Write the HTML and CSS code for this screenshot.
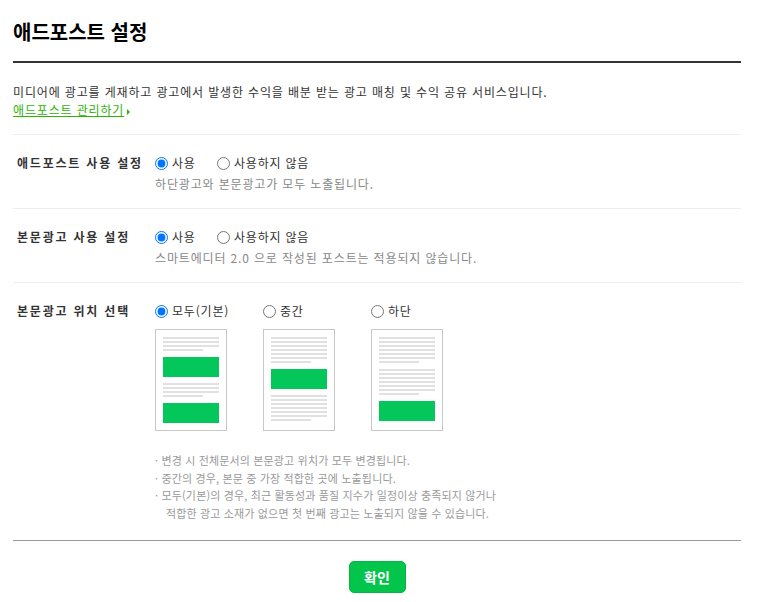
FILE: index.html
```html
<!DOCTYPE html>
<html lang="ko">
<head>
<meta charset="utf-8">
<title>애드포스트 설정</title>
<link rel="stylesheet" href="styles.css">
</head>
<body>
<div class="page">
  <h1 class="title">애드포스트 설정</h1>
  <div class="intro">
    <p class="intro-text">미디어에 광고를 게재하고 광고에서 발생한 수익을 배분 받는 광고 매칭 및 수익 공유 서비스입니다.</p>
    <a class="intro-link" href="#">애드포스트 관리하기</a><span class="arrow"></span>
  </div>

  <div class="row">
    <div class="label">애드포스트 사용 설정</div>
    <div class="value">
      <div class="radios">
        <label class="opt opt-use"><input type="radio" name="a" checked>사용</label>
        <label class="opt"><input type="radio" name="a">사용하지 않음</label>
      </div>
      <p class="help">하단광고와 본문광고가 모두 노출됩니다.</p>
    </div>
  </div>

  <div class="row">
    <div class="label">본문광고 사용 설정</div>
    <div class="value">
      <div class="radios">
        <label class="opt opt-use"><input type="radio" name="b" checked>사용</label>
        <label class="opt"><input type="radio" name="b">사용하지 않음</label>
      </div>
      <p class="help">스마트에디터 2.0 으로 작성된 포스트는 적용되지 않습니다.</p>
    </div>
  </div>

  <div class="row row-last">
    <div class="label">본문광고 위치 선택</div>
    <div class="value">
      <div class="positions">
        <div class="pos">
          <label class="opt"><input type="radio" name="c" checked>모두(기본)</label>
          <div class="thumb">
            <div class="lines"><i></i><i></i><i></i><i class="short"></i></div>
            <div class="ad"></div>
            <div class="lines"><i></i><i></i><i></i><i class="short"></i></div>
            <div class="ad"></div>
          </div>
        </div>
        <div class="pos">
          <label class="opt"><input type="radio" name="c">중간</label>
          <div class="thumb">
            <div class="lines"><i></i><i></i><i></i><i></i><i></i><i></i><i class="short"></i></div>
            <div class="ad"></div>
            <div class="lines"><i></i><i></i><i></i><i></i><i></i><i></i><i class="short"></i></div>
          </div>
        </div>
        <div class="pos">
          <label class="opt"><input type="radio" name="c">하단</label>
          <div class="thumb">
            <div class="lines"><i></i><i></i><i></i><i></i><i></i><i></i><i class="short"></i></div>
            <div class="lines"><i></i><i></i><i></i><i></i><i></i><i></i><i class="short"></i></div>
            <div class="ad"></div>
          </div>
        </div>
      </div>
      <ul class="notes">
        <li>· 변경 시 전체문서의 본문광고 위치가 모두 변경됩니다.</li>
        <li>· 중간의 경우, 본문 중 가장 적합한 곳에 노출됩니다.</li>
        <li>· 모두(기본)의 경우, 최근 활동성과 품질 지수가 일정이상 충족되지 않거나<br>적합한 광고 소재가 없으면 첫 번째 광고는 노출되지 않을 수 있습니다.</li>
      </ul>
    </div>
  </div>

  <div class="actions">
    <button class="btn-ok" type="button">확인</button>
  </div>
</div>
</body>
</html>
```

FILE: styles.css
```css
* { box-sizing: border-box; }
html, body { margin: 0; padding: 0; background: #fff; }
body {
  font-family: "Noto Sans CJK KR", "Noto Sans", sans-serif;
  font-size: 12px;
  color: #333;
}
.page {
  width: 728px;
  margin-left: 13px;
}
.title {
  margin: 0;
  padding-top: 20px;
  padding-bottom: 17px;
  font-size: 20px;
  line-height: 24px;
  font-weight: 700;
  color: #000;
  border-bottom: 2px solid #333;
  letter-spacing: 0;
}
.intro {
  padding: 20px 0 15px;
  border-bottom: 1px solid #eee;
  line-height: 18px;
  letter-spacing: 0.85px;
}
.intro-text { margin: 0; color: #333; }
.intro-link {
  color: #2db400;
  text-decoration: underline;
}
.arrow {
  display: inline-block;
  width: 0; height: 0;
  margin-left: 3px;
  vertical-align: middle;
  border-left: 3px solid #2db400;
  border-top: 3px solid transparent;
  border-bottom: 3px solid transparent;
}
.row {
  display: flex;
  padding: 18px 0 14px;
  border-bottom: 1px solid #eee;
}
.row-last {
  border-bottom: 1px solid #999;
  padding-bottom: 18px;
}
.label {
  width: 142px;
  padding-left: 4px;
  font-weight: 700;
  line-height: 20px;
  letter-spacing: 1.8px;
  color: #333;
}
.value { flex: 1; }
.radios { display: flex; line-height: 20px; }
.opt {
  display: flex;
  align-items: center;
  line-height: 20px;
  color: #333;
  letter-spacing: 0.8px;
}
.opt input {
  width: 13px; height: 13px;
  margin: 0 4px 0 0;
}
.opt-use { width: 62px; }
.help {
  margin: 1px 0 0;
  line-height: 20px;
  color: #888;
  letter-spacing: 0.85px;
}
.positions { display: flex; }
.pos { width: 108px; }
.thumb {
  margin-top: 8px;
  width: 72px;
  height: 102px;
  border: 1px solid #c8c8c8;
  padding: 7px 7px 0;
  display: flex;
  flex-direction: column;
  gap: 6px;
}
.lines { display: flex; flex-direction: column; gap: 2px; }
.lines i { display: block; height: 2px; background: #e1e1e1; }
.lines i.short { width: 40px; }
.ad { height: 20px; background: #03c75a; }
.notes {
  list-style: none;
  margin: 21px 0 0;
  padding: 0;
  font-size: 11px;
  line-height: 17.5px;
  color: #999;
  letter-spacing: 0.15px;
}
.notes li { padding-left: 11px; text-indent: -11px; }
.actions {
  display: flex;
  justify-content: center;
  padding-top: 20px;
}
.btn-ok {
  width: 57px;
  height: 32px;
  border: 1px solid #00b843;
  border-radius: 5px;
  background: #03c54b;
  color: #fff;
  font-family: "Noto Sans CJK KR", sans-serif;
  font-size: 14px;
  font-weight: 700;
  padding: 0;
}
```
